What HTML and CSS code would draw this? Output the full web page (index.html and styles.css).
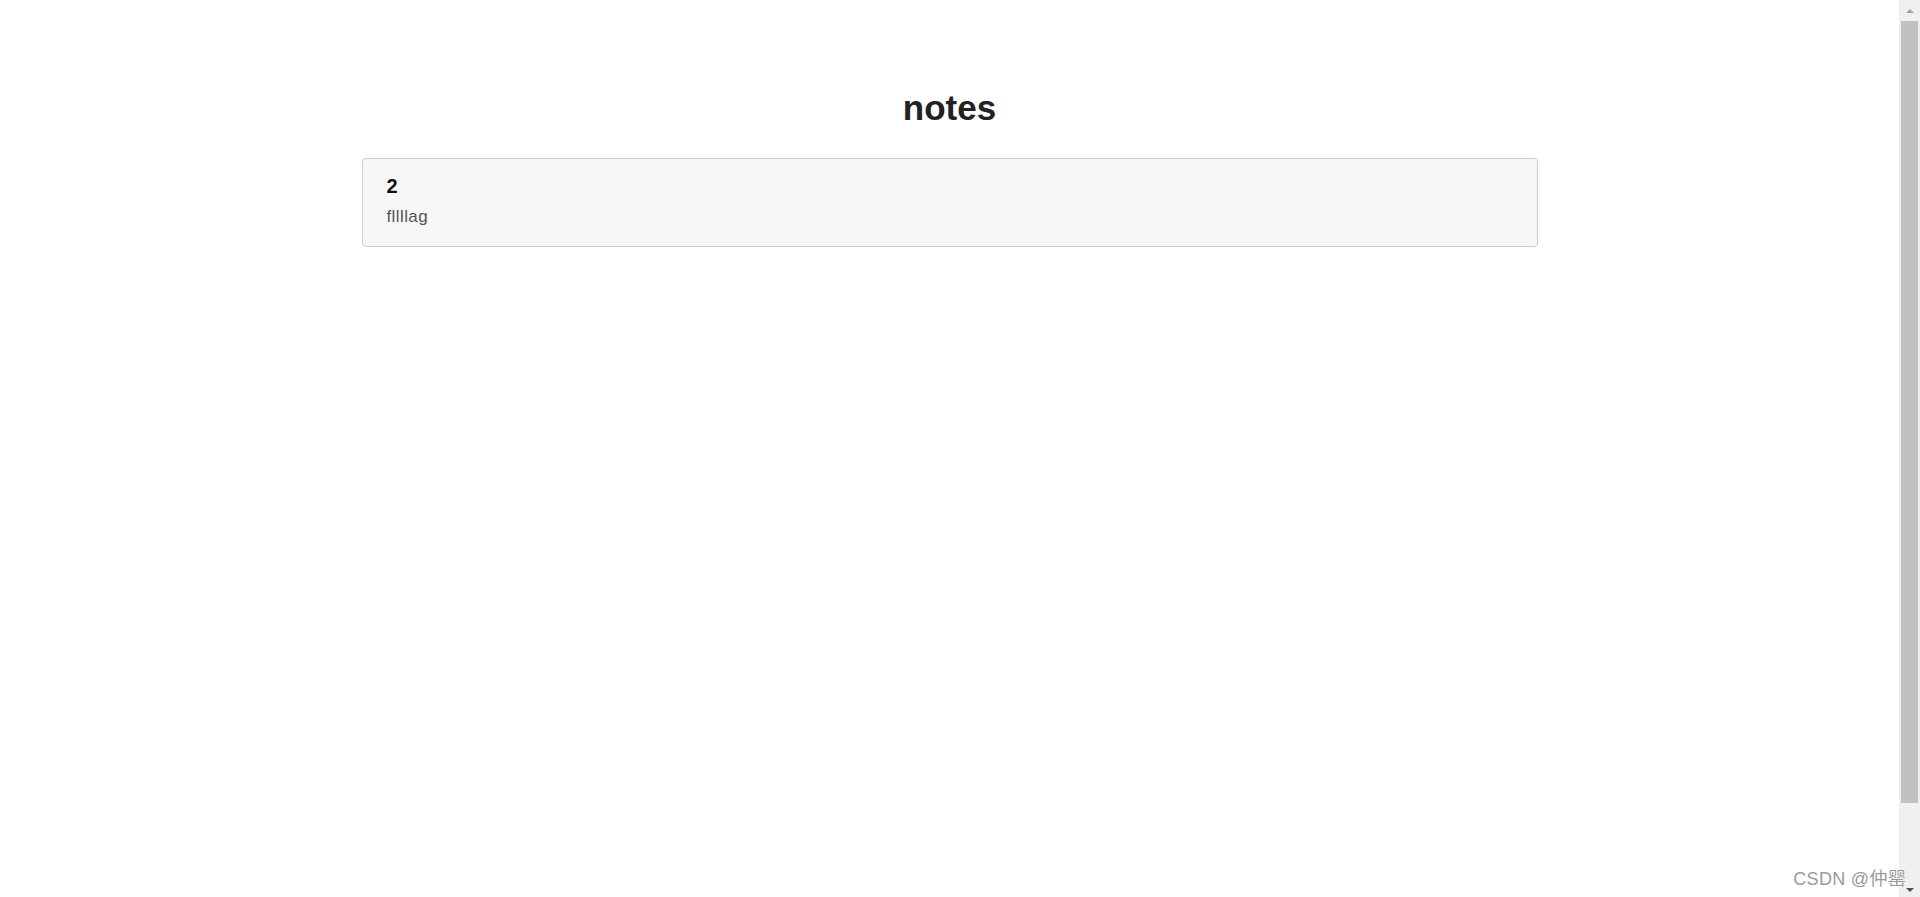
FILE: index.html
```html
<!DOCTYPE html>
<html lang="en">
<head>
<meta charset="utf-8">
<title>notes</title>
<link rel="stylesheet" href="styles.css">
</head>
<body>
<div class="page">
  <main class="main">
    <div class="container">
      <h1 class="title">notes</h1>
      <div class="note">
        <h4 class="note-title">2</h4>
        <p class="note-text">fllllag</p>
      </div>
    </div>
  </main>
  <aside class="scrollbar">
    <div class="arrow arrow-up"></div>
    <div class="thumb"></div>
    <div class="track-rest"></div>
    <div class="arrow arrow-down"></div>
  </aside>
</div>
<div class="watermark">CSDN @仲罂</div>
</body>
</html>
```

FILE: styles.css
```css
html, body {
  margin: 0;
  padding: 0;
  height: 100%;
  background: #ffffff;
  font-family: "Liberation Sans", Arial, "Noto Sans CJK SC", sans-serif;
  overflow: hidden;
}

.page {
  display: flex;
  height: 100vh;
}

.main {
  flex: 1;
  min-width: 0;
}

.container {
  width: 1176px;
  margin: 0 auto;
  padding-top: 88px;
}

.title {
  margin: 0 0 30px;
  font-size: 35px;
  line-height: 40px;
  font-weight: 700;
  text-align: center;
  color: #222222;
}

.note {
  background: #f7f7f7;
  border: 1px solid #cccccc;
  border-radius: 4px;
  padding: 16px 24px 18px;
}

.note-title {
  margin: 0 0 8px;
  font-size: 20px;
  line-height: 22px;
  font-weight: 700;
  color: #111111;
}

.note-text {
  margin: 0;
  font-size: 17px;
  line-height: 23px;
  letter-spacing: 0.4px;
  color: #555555;
}

.scrollbar {
  width: 21px;
  flex: none;
  background: #f0f0f0;
  display: flex;
  flex-direction: column;
  align-items: center;
}

.arrow {
  width: 0;
  height: 0;
  border-left: 4px solid transparent;
  border-right: 4px solid transparent;
}

.arrow-up {
  margin: 9px 0 8px;
  border-bottom: 4px solid #a3a3a3;
}

.thumb {
  width: 17px;
  height: 782px;
  background: #c1c1c1;
}

.track-rest {
  flex: 1;
}

.arrow-down {
  margin: 0 0 5px;
  border-top: 4px solid #505050;
}

.watermark {
  position: absolute;
  right: 14px;
  bottom: 7px;
  font-size: 18px;
  line-height: 22px;
  letter-spacing: 0.3px;
  color: #9a9a9a;
  font-family: "Liberation Sans", Arial, "Noto Sans CJK SC", sans-serif;
}
```
